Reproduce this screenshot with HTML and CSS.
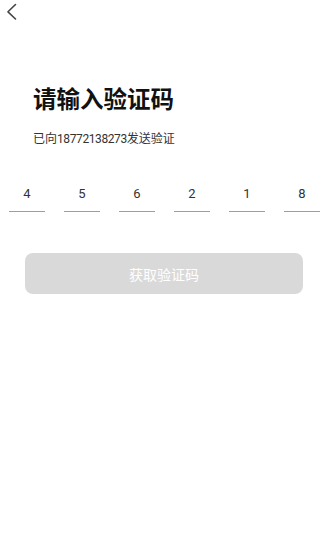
FILE: index.html
```html
<!DOCTYPE html>
<html lang="zh">
<head>
<meta charset="utf-8">
<link rel="stylesheet" href="styles.css">
</head>
<body>
<div class="page">
  <div class="header">
    <svg class="back" width="24" height="24" viewBox="0 0 24 24"><path d="M15.5 4.5 L8 11.8 L15.5 19" fill="none" stroke="#444" stroke-width="1.6" stroke-linecap="round" stroke-linejoin="round"/></svg>
  </div>
  <h1 class="title">请输入验证码</h1>
  <p class="sub">已向<span class="num">18772138273</span>发送验证</p>
  <div class="code">
    <div class="cell">4</div>
    <div class="cell">5</div>
    <div class="cell">6</div>
    <div class="cell">2</div>
    <div class="cell">1</div>
    <div class="cell">8</div>
  </div>
  <button class="btn">获取验证码</button>
</div>
</body>
</html>
```
FILE: styles.css
```css
html, body {
  margin: 0;
  padding: 0;
  background: #fff;
}
.page {
  width: 320px;
  height: 552px;
  font-family: Roboto, "Noto Sans CJK SC", sans-serif;
  color: #222;
}
.header {
  height: 24px;
}
.back {
  display: block;
}
.title {
  margin: 60px 0 0 33px;
  font-size: 23.5px;
  line-height: 32px;
  font-weight: 700;
  color: #111;
}
.sub {
  margin: 14px 0 0 33px;
  font-size: 12px;
  line-height: 18px;
  color: #333;
}
.num {
  letter-spacing: -0.4px;
}
.code {
  display: flex;
  gap: 19px;
  padding-left: 9px;
  margin-top: 36px;
}
.cell {
  width: 36px;
  height: 27px;
  border-bottom: 1px solid #9e9e9e;
  text-align: center;
  font-size: 13px;
  line-height: 20px;
  color: #333;
}
.btn {
  display: block;
  margin: 41px 0 0 25px;
  width: 278px;
  height: 41px;
  border: none;
  border-radius: 8px;
  background: #d9d9d9;
  color: #fff;
  font-family: "Noto Sans CJK SC", sans-serif;
  font-size: 14px;
  padding: 0;
}
```
